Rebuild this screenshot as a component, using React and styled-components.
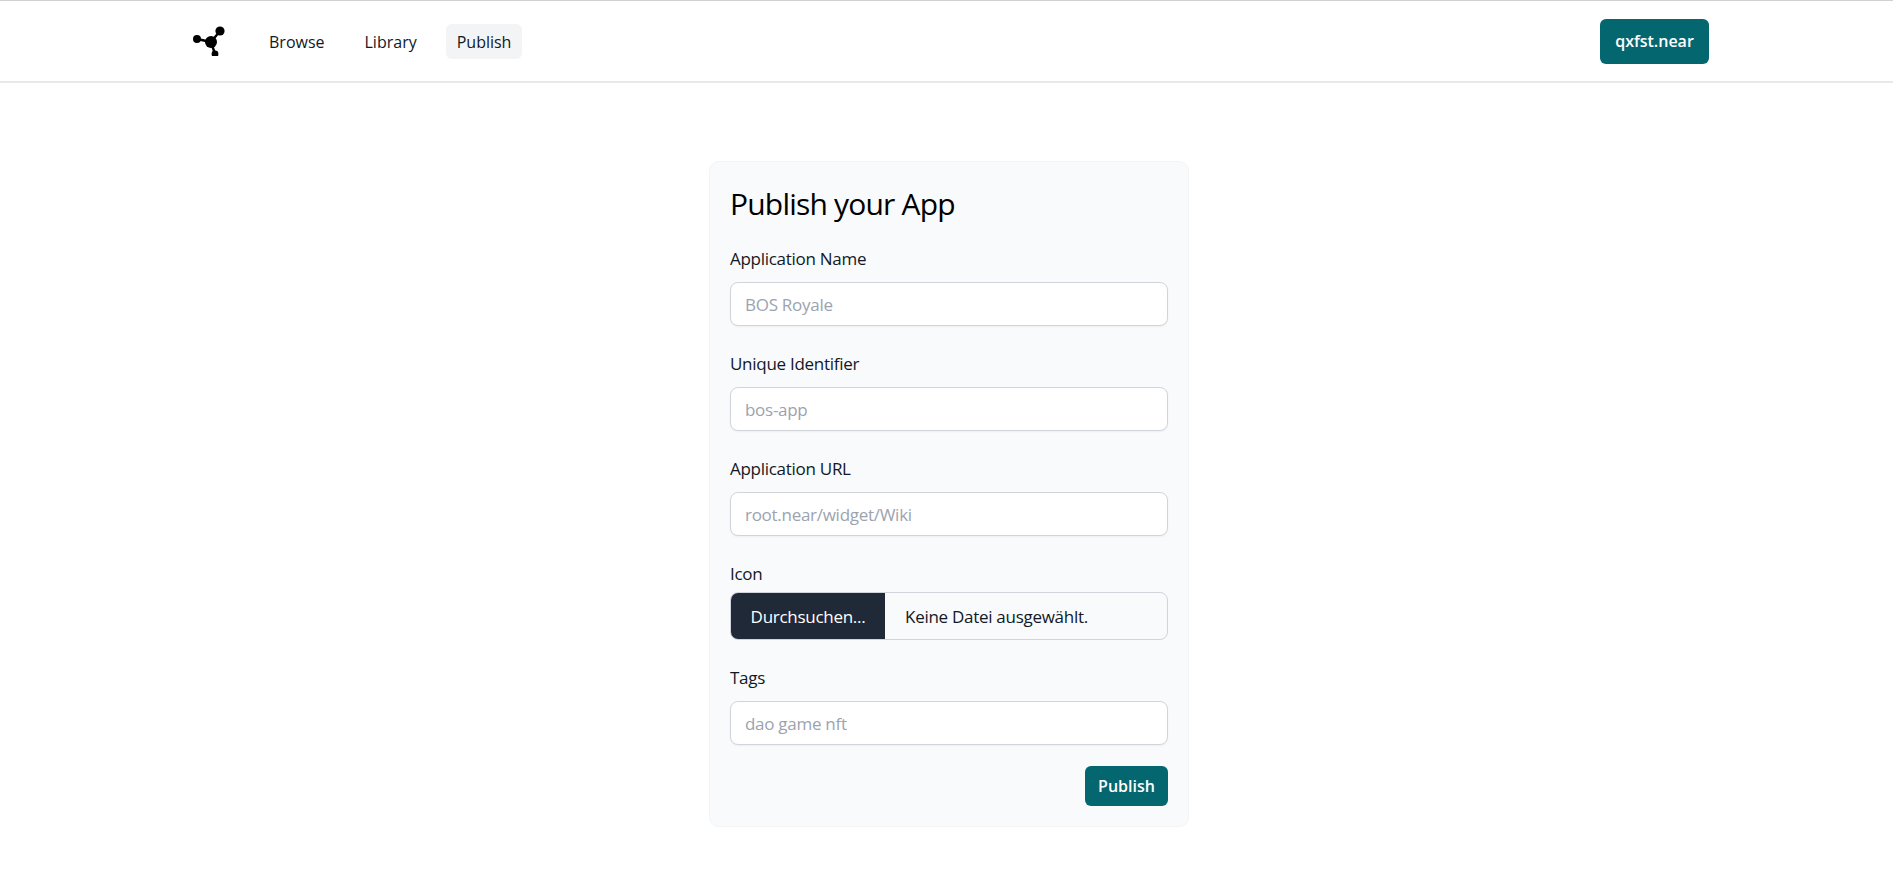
import React from 'react';
import styled, { createGlobalStyle } from 'styled-components';

const fields = {
  name: { label: 'Application Name', placeholder: 'BOS Royale' },
  id: { label: 'Unique Identifier', placeholder: 'bos-app' },
  url: { label: 'Application URL', placeholder: 'root.near/widget/Wiki' }
};

export default function App() {
  return (
    <>
      <GlobalStyle />
      <Header>
        <LeftGroup>
          <Logo />
          <NavLinks>
            <NavLink href="#">Browse</NavLink>
            <NavLink href="#">Library</NavLink>
            <NavLink href="#" $active>
              Publish
            </NavLink>
          </NavLinks>
        </LeftGroup>
        <AccountButton>qxfst.near</AccountButton>
      </Header>

      <Main>
        <Card>
          <Title>Publish your App</Title>
          {Object.entries(fields).map(([key, field]) => (
            <Field key={key}>
              <Label htmlFor={key}>{field.label}</Label>
              <Input id={key} placeholder={field.placeholder} />
            </Field>
          ))}
          <Field>
            <Label $tight>Icon</Label>
            <FileBox>
              <FileButton type="button">Durchsuchen...</FileButton>
              <FileName>Keine Datei ausgewählt.</FileName>
            </FileBox>
          </Field>
          <Field $last>
            <Label htmlFor="tags">Tags</Label>
            <Input id="tags" placeholder="dao game nft" />
          </Field>
          <Actions>
            <SubmitButton type="button">Publish</SubmitButton>
          </Actions>
        </Card>
      </Main>
    </>
  );
}

function Logo() {
  return (
    <LogoSvg viewBox="0 0 36 30" width="36" height="30" aria-hidden="true">
      <g stroke="#000" strokeWidth="2.4">
        <line x1="5" y1="13" x2="19" y2="16" />
        <line x1="19" y1="16" x2="28" y2="5" />
        <line x1="19" y1="16" x2="23" y2="28" />
      </g>
      <circle cx="5" cy="13" r="4" />
      <circle cx="19" cy="16" r="6" />
      <circle cx="28" cy="5" r="4.6" />
      <circle cx="23" cy="28" r="3.4" />
    </LogoSvg>
  );
}

const font = `'Open Sans', 'Noto Sans', sans-serif`;

const GlobalStyle = createGlobalStyle`
  * {
    box-sizing: border-box;
  }
  body {
    margin: 0;
    background: #fff;
    font-family: ${font};
    color: #111827;
  }
`;

const Header = styled('header')`
  display: flex;
  align-items: center;
  justify-content: space-between;
  height: 83px;
  padding: 0 184px 0 192px;
  border-top: 1px solid #d1d1d1;
  border-bottom: 2px solid #e9e9e9;
`;

const LeftGroup = styled('div')`
  display: flex;
  align-items: center;
`;

const LogoSvg = styled('svg')`
  display: block;
  margin-right: 30px;
`;

const NavLinks = styled('nav')`
  display: flex;
  align-items: center;
  gap: 18px;
`;

const NavLink = styled('a')`
  display: block;
  padding: 7px 11px 5px;
  border-radius: 6px;
  font-size: 16px;
  line-height: 23px;
  color: #111827;
  text-decoration: none;
  background: ${props => (props.$active ? '#f3f4f6' : 'transparent')};
`;

const AccountButton = styled('button')`
  width: 109px;
  height: 45px;
  padding: 0;
  border: none;
  border-radius: 6px;
  background: #04666f;
  color: #fff;
  font-family: ${font};
  font-size: 16px;
  font-weight: 600;
`;

const Main = styled('main')`
  display: flex;
  justify-content: center;
  padding: 78px 0 63px 5px;
`;

const Card = styled('form')`
  width: 480px;
  padding: 20px;
  border: 1px solid #f3f4f6;
  border-radius: 10px;
  background: #f9fafb;
`;

const Title = styled('h1')`
  margin: 0 0 19px;
  font-size: 30px;
  line-height: 44px;
  font-weight: 400;
  letter-spacing: -0.8px;
  color: #000;
`;

const Field = styled('div')`
  margin-bottom: ${props => (props.$last ? '21px' : '24px')};
`;

const Label = styled('label')`
  display: block;
  margin-bottom: ${props => (props.$tight ? '4px' : '9px')};
  font-size: 17px;
  line-height: 28px;
  letter-spacing: -0.28px;
  color: #111827;
`;

const Input = styled('input')`
  display: block;
  width: 100%;
  height: 44px;
  padding: 0 14px;
  border: 1px solid #d1d5db;
  border-radius: 8px;
  background: #fff;
  box-shadow: 0 1px 2px rgba(0, 0, 0, 0.05);
  font-family: ${font};
  font-size: 17px;
  letter-spacing: -0.28px;
  outline: none;
  &::placeholder {
    color: #9ca3af;
    opacity: 1;
  }
`;

const FileBox = styled('div')`
  display: flex;
  align-items: center;
  height: 48px;
  overflow: hidden;
  border: 1px solid #d1d5db;
  border-radius: 8px;
  background: #f9fafb;
`;

const FileButton = styled('button')`
  width: 154px;
  height: 100%;
  padding: 0;
  border: none;
  background: #1f2937;
  color: #fff;
  font-family: ${font};
  font-size: 17px;
  letter-spacing: -0.28px;
`;

const FileName = styled('span')`
  margin-left: 20px;
  font-size: 17px;
  letter-spacing: -0.28px;
  color: #111827;
`;

const Actions = styled('div')`
  display: flex;
  justify-content: flex-end;
`;

const SubmitButton = styled('button')`
  width: 83px;
  height: 40px;
  padding: 0;
  border: none;
  border-radius: 6px;
  background: #04666f;
  color: #fff;
  font-family: ${font};
  font-size: 16px;
  font-weight: 600;
`;
